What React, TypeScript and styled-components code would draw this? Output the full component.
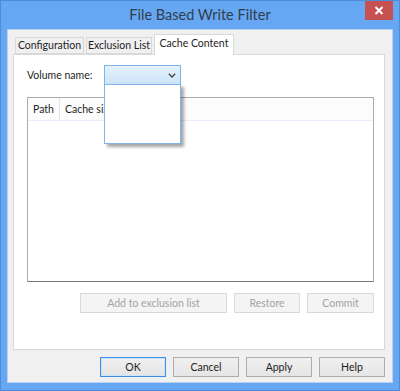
import React from 'react';
import styled, { createGlobalStyle } from 'styled-components';

const GlobalStyle = createGlobalStyle`
  html, body {
    margin: 0;
    padding: 0;
    background: #66a6f2;
  }
  * {
    box-sizing: border-box;
  }
`;

const Window = styled.div`
  width: 400px;
  height: 391px;
  background: #66a7f3;
  border: 1px solid #4f8bd9;
  display: flex;
  flex-direction: column;
  font-family: Lato, 'Noto Sans', sans-serif;
  font-size: 10.5px;
  color: #1e1e1e;
`;

const TitleBar = styled.div`
  height: 28px;
  display: flex;
  align-items: flex-start;
  position: relative;
`;

const Title = styled.div`
  flex: 1;
  text-align: center;
  font-size: 14.5px;
  line-height: 27px;
  color: #333e4c;
`;

const CloseButton = styled.div`
  position: absolute;
  top: 0;
  right: 6px;
  width: 28px;
  height: 19px;
  background: #c75050;
  display: flex;
  align-items: center;
  justify-content: center;
`;

const Client = styled.div`
  flex: 1;
  margin: 0 6px 7px 6px;
  background: #f0f0f0;
  border: 1px solid #b7d2f3;
  padding: 4px 7px 5px 5px;
  display: flex;
  flex-direction: column;
`;

const TabRow = styled.div`
  display: flex;
  align-items: flex-end;
  height: 20px;
  padding-left: 2px;
  position: relative;
  z-index: 1;
`;

const Tab = styled.div<{ $active?: boolean; $w: number }>`
  width: ${p => p.$w}px;
  height: ${p => (p.$active ? '21px' : '17px')};
  margin-bottom: ${p => (p.$active ? '-1px' : '0')};
  margin-right: ${p => (p.$active ? '0' : '2px')};
  background: ${p => (p.$active ? '#ffffff' : '#f0f0f0')};
  border: 1px solid #d9d9d9;
  border-bottom: ${p => (p.$active ? 'none' : '1px solid #d9d9d9')};
  display: flex;
  align-items: center;
  justify-content: center;
  padding-bottom: ${p => (p.$active ? '3px' : '0')};
  line-height: 1;
  white-space: nowrap;
`;

const Panel = styled.div`
  height: 296px;
  background: #ffffff;
  border: 1px solid #d9d9d9;
  padding: 10px 11px 0 13px;
  display: flex;
  flex-direction: column;
`;

const VolumeRow = styled.div`
  display: flex;
  align-items: center;
  height: 20px;
  position: relative;
`;

const Label = styled.div`
  width: 77px;
  white-space: nowrap;
`;

const Combo = styled.div`
  width: 77px;
  height: 20px;
  border: 1px solid #7eb4ea;
  background: linear-gradient(#e5f1fb, #cde4f7);
  display: flex;
  align-items: center;
  justify-content: flex-end;
  padding-right: 4px;
`;

const DropList = styled.div`
  position: absolute;
  left: 77px;
  top: 19px;
  width: 77px;
  height: 60px;
  background: #ffffff;
  border: 1px solid #7eb4ea;
  box-shadow: 3px 3px 3px rgba(0, 0, 0, 0.35);
  z-index: 5;
`;

const ListView = styled.div`
  margin-top: 12px;
  width: 347px;
  height: 185px;
  border: 1px solid #acacac;
  border-bottom-color: #7a7a7a;
  display: flex;
  flex-direction: column;
`;

const Header = styled.div`
  height: 23px;
  display: flex;
  background: #fcfcfc;
  border-bottom: 1px solid #e5eefa;
`;

const HeaderCell = styled.div<{ $w?: number }>`
  width: ${p => (p.$w ? `${p.$w}px` : 'auto')};
  flex: ${p => (p.$w ? 'none' : '1')};
  padding-left: 5px;
  display: flex;
  align-items: center;
  border-right: ${p => (p.$w ? '1px solid #e5e5e5' : 'none')};
  white-space: nowrap;
`;

const ActionRow = styled.div`
  display: flex;
  justify-content: flex-end;
  gap: 7px;
  margin-top: 11px;
  width: 347px;
`;

const Button = styled.div<{ $w: number; $disabled?: boolean; $default?: boolean }>`
  width: ${p => p.$w}px;
  height: 20px;
  display: flex;
  align-items: center;
  justify-content: center;
  border: 1px solid ${p => (p.$disabled ? '#d9d9d9' : p.$default ? '#3d8ee8' : '#adadad')};
  background: ${p => (p.$disabled ? '#f4f4f4' : 'linear-gradient(#f0f0f0, #e5e5e5)')};
  color: ${p => (p.$disabled ? '#a3a3a3' : '#1e1e1e')};
  box-shadow: ${p => (p.$default ? 'inset 0 0 0 1px #cce4f7' : 'none')};
  white-space: nowrap;
`;

const FooterRow = styled.div`
  display: flex;
  justify-content: flex-end;
  gap: 7px;
  margin-top: 7px;
`;

const App: React.FC = () => {
  return (
    <>
      <GlobalStyle />
      <Window>
        <TitleBar>
          <Title>File Based Write Filter</Title>
          <CloseButton>
            <svg width="10" height="9" viewBox="0 0 10 9">
              <path d="M1.5 1 L8.5 8 M8.5 1 L1.5 8" stroke="#ffffff" strokeWidth="2" />
            </svg>
          </CloseButton>
        </TitleBar>
        <Client>
          <TabRow>
            <Tab $w={69}>Configuration</Tab>
            <Tab $w={66}>Exclusion List</Tab>
            <Tab $w={80} $active>Cache Content</Tab>
          </TabRow>
          <Panel>
            <VolumeRow>
              <Label>Volume name:</Label>
              <Combo>
                <svg width="8" height="5" viewBox="0 0 8 5">
                  <path d="M0.8 0.8 L4 4 L7.2 0.8" fill="none" stroke="#404040" strokeWidth="1.3" />
                </svg>
              </Combo>
              <DropList />
            </VolumeRow>
            <ListView>
              <Header>
                <HeaderCell $w={32}>Path</HeaderCell>
                <HeaderCell>Cache size</HeaderCell>
              </Header>
            </ListView>
            <ActionRow>
              <Button $w={147} $disabled>Add to exclusion list</Button>
              <Button $w={66} $disabled>Restore</Button>
              <Button $w={67} $disabled>Commit</Button>
            </ActionRow>
          </Panel>
          <FooterRow>
            <Button $w={66} $default>OK</Button>
            <Button $w={66}>Cancel</Button>
            <Button $w={66}>Apply</Button>
            <Button $w={66}>Help</Button>
          </FooterRow>
        </Client>
      </Window>
    </>
  );
};

export default App;
